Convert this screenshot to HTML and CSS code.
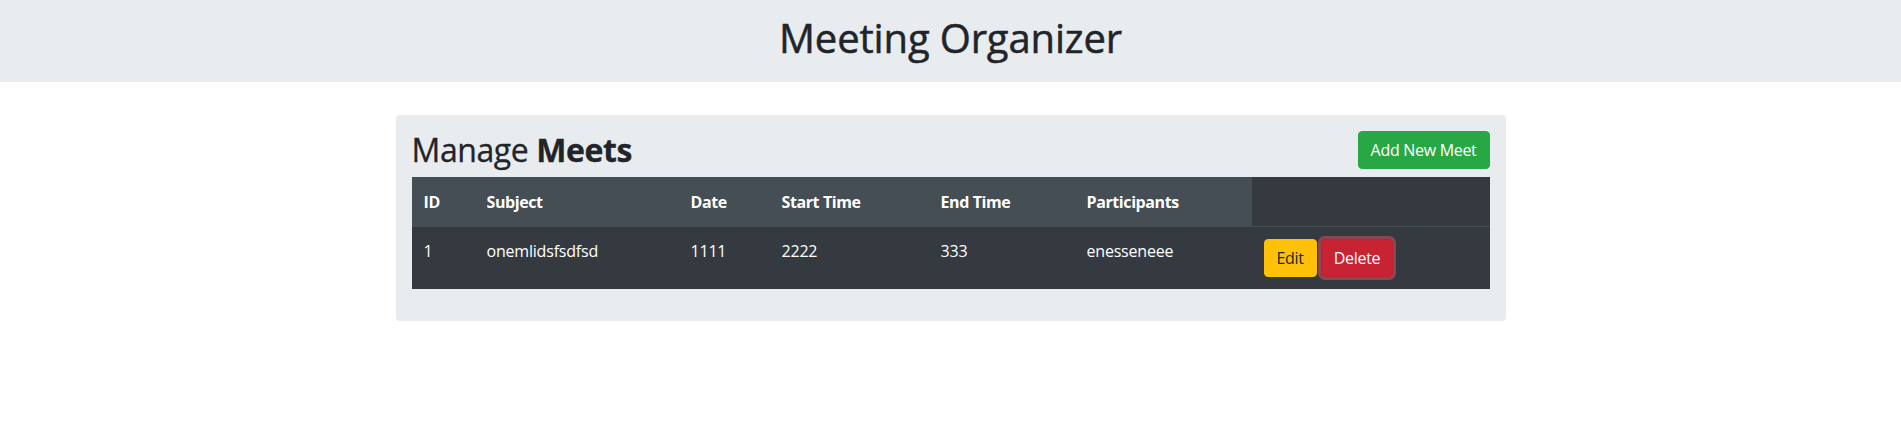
FILE: index.html
```html
<!DOCTYPE html>
<html lang="en">
<head>
<meta charset="utf-8">
<title>Meeting Organizer</title>
<link rel="stylesheet" href="styles.css">
</head>
<body>
<header class="site-header">
  <h1 class="site-title">Meeting Organizer</h1>
</header>
<main class="container">
  <section class="card">
    <div class="card-top">
      <h2 class="card-title">Manage <b>Meets</b></h2>
      <button class="btn btn-success" type="button">Add New Meet</button>
    </div>
    <table class="meets">
      <colgroup>
        <col class="c-id"><col class="c-subject"><col class="c-date"><col class="c-start"><col class="c-end"><col class="c-part"><col class="c-actions">
      </colgroup>
      <thead>
        <tr>
          <th>ID</th>
          <th>Subject</th>
          <th>Date</th>
          <th>Start Time</th>
          <th>End Time</th>
          <th>Participants</th>
          <th class="th-actions"></th>
        </tr>
      </thead>
      <tbody>
        <tr>
          <td>1</td>
          <td>onemlidsfsdfsd</td>
          <td>1111</td>
          <td>2222</td>
          <td>333</td>
          <td>enesseneee</td>
          <td class="actions"><button class="btn btn-warning" type="button">Edit</button><button class="btn btn-danger is-focused" type="button">Delete</button></td>
        </tr>
      </tbody>
    </table>
  </section>
</main>
</body>
</html>
```

FILE: styles.css
```css
* { box-sizing: border-box; }

body {
  margin: 0;
  font-family: "Open Sans", "Noto Sans", sans-serif;
  font-size: 16px;
  line-height: 1.5;
  color: #212529;
  background: #fff;
}

.site-header {
  background: #e9ecef;
  height: 82px;
  padding-bottom: 7px;
  display: flex;
  justify-content: center;
  align-items: center;
}

.site-title {
  margin: 0;
  font-size: 40px;
  font-weight: 500;
  line-height: 48px;
  letter-spacing: -0.15px;
  color: #212529;
  -webkit-text-stroke: 0.5px #212529;
}

.container {
  width: 1140px;
  margin: 33px auto 0;
  padding: 0 15px;
}

.card {
  background: #e9ecef;
  border-radius: 4px;
  padding: 16px;
}

.card-top {
  display: flex;
  justify-content: space-between;
  align-items: flex-start;
  margin-bottom: 8px;
}

.card-title {
  margin: 0;
  font-size: 32px;
  font-weight: 500;
  line-height: 38px;
  letter-spacing: -0.4px;
  color: #212529;
  -webkit-text-stroke: 0.3px #212529;
}

.card-title b { font-weight: 700; }

.btn {
  display: inline-block;
  font-family: inherit;
  font-size: 16px;
  line-height: 24px;
  padding: 6px 12px;
  border: 1px solid transparent;
  border-radius: 4px;
  cursor: pointer;
  letter-spacing: -0.3px;
}

.btn-success { background: #28a745; border-color: #28a745; color: #fff; }
.btn-warning { background: #ffc107; border-color: #ffc107; color: #212529; }
.btn-danger { background: #c82333; border-color: #bd2130; color: #fff; }
.btn-danger.is-focused { box-shadow: 0 0 0 3px rgba(225, 83, 97, 0.5); }

.meets {
  width: 100%;
  border-collapse: collapse;
  table-layout: fixed;
  background: #343a40;
  color: #fff;
  margin-bottom: 16px;
}

.c-id { width: 63px; }
.c-subject { width: 204px; }
.c-date { width: 91px; }
.c-start { width: 159px; }
.c-end { width: 146px; }
.c-part { width: 177px; }
.c-actions { width: 238px; }

.meets th,
.meets td {
  padding: 12px;
  text-align: left;
  vertical-align: top;
  line-height: 24px;
}

.meets th {
  background: #454d55;
  font-weight: 700;
  padding-top: 13px;
  border-bottom: 1px solid #454d55;
  letter-spacing: -0.4px;
}

.meets th.th-actions { background: #343a40; }

.meets td { letter-spacing: -0.2px; }

.actions { padding-top: 12px; }
.actions .btn + .btn { margin-left: 4px; }
```
